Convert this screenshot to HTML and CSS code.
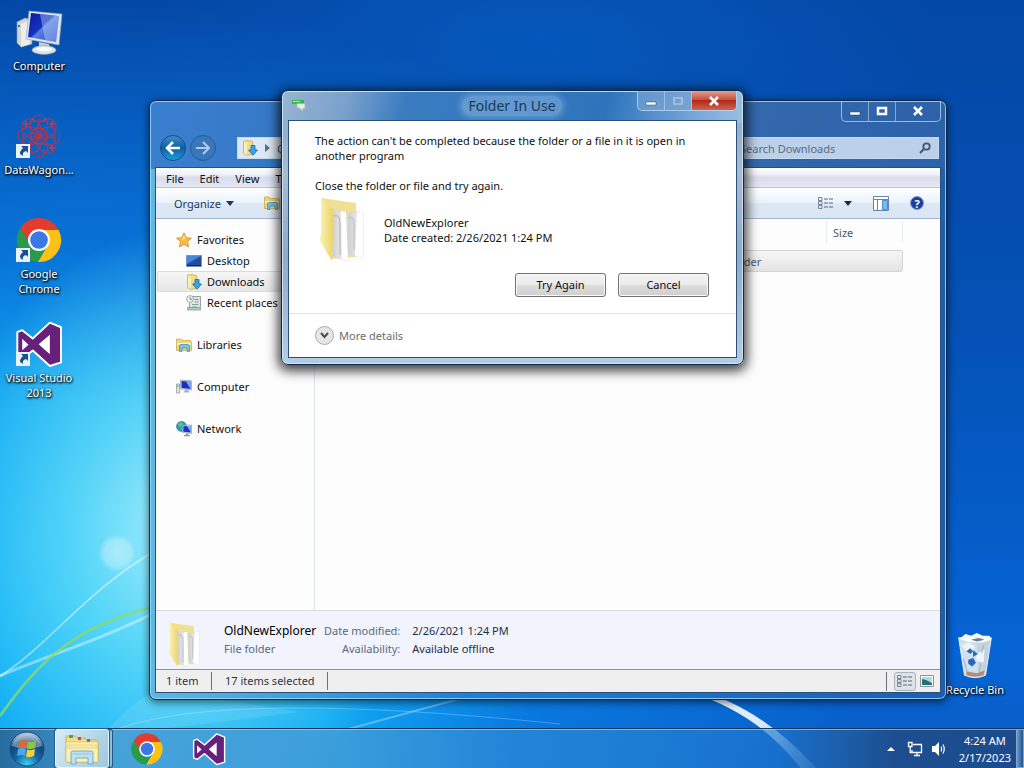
FILE: index.html
```html
<!DOCTYPE html>
<html lang="en">
<head>
    <meta charset="UTF-8">
    <meta name="viewport" content="width=device-width, initial-scale=1.0">
    <title>Folder In Use</title>
    <link rel="stylesheet" href="styles.css">
</head>
<body>
    <!-- shared icons -->
    <svg class="sprite" aria-hidden="true">
        <defs>
            <linearGradient id="g-screen" x1="0" y1="0" x2="1" y2="1">
                <stop offset="0" stop-color="#0a1e98"/>
                <stop offset=".45" stop-color="#1430c4"/>
                <stop offset=".5" stop-color="#5a80e0"/>
                <stop offset="1" stop-color="#1c46c8"/>
            </linearGradient>
            <linearGradient id="g-folder" x1="0" y1="0" x2="1" y2="0">
                <stop offset="0" stop-color="#fbf3b4"/>
                <stop offset="1" stop-color="#ecd468"/>
            </linearGradient>
            <linearGradient id="g-page" x1="0" y1="0" x2="1" y2="0">
                <stop offset="0" stop-color="#cfcfd2"/>
                <stop offset="1" stop-color="#f8f8f8"/>
            </linearGradient>
            <radialGradient id="g-orb" cx=".5" cy=".95" r=".9">
                <stop offset="0" stop-color="#3fd0f4"/>
                <stop offset=".4" stop-color="#1268a8"/>
                <stop offset=".75" stop-color="#0f4478"/>
                <stop offset="1" stop-color="#a8c4d8"/>
            </radialGradient>
        </defs>
        <symbol id="i-chrome" viewBox="0 0 48 48">
            <path fill="#e33b2e" d="M24 14H43.6A22 22 0 0 0 5.5 12L15.3 29A10 10 0 0 1 24 14Z"/>
            <path fill="#fbc116" d="M24 14H43.6A22 22 0 0 1 22.9 46L32.7 29A10 10 0 0 0 24 14Z"/>
            <path fill="#2b9a48" d="M22.9 46A22 22 0 0 1 5.5 12L15.3 29A10 10 0 0 0 32.7 29Z"/>
            <circle cx="24" cy="24" r="11" fill="#fff"/>
            <circle cx="24" cy="24" r="8.8" fill="#3b78e7"/>
        </symbol>
        <symbol id="i-vs" viewBox="44 355 146 146">
            <path fill="#68217a" stroke="#fff" stroke-width="6" stroke-linejoin="round" d="M51 392L66 386L98 411L150 363L184 377V484L150 495L98 448L66 473L51 466Z"/>
            <path fill="#fff" d="M66 412V447L85 430ZM116 429L150 400V459Z"/>
        </symbol>
        <symbol id="i-shortcut" viewBox="0 0 14 14">
            <path fill="#e8f4fc" d="M0 0H14V14H0Z"/>
            <path fill="#1d4d94" d="M5 2H12V9L10 7Q6 8 7 12Q1 9 7 4Z"/>
        </symbol>
        <symbol id="i-pc" viewBox="0 0 48 48">
            <path fill="#d0d5d8" stroke="#8b97a4" stroke-width=".6" d="M2 14L10 10L17 12V36L6 39L2 35Z"/>
            <path fill="#eceeee" d="M6 16L15 12V36L6 39Z"/>
            <circle cx="4" cy="18" r="1" fill="#444"/>
            <path fill="#c8ced2" d="M24 34L34 36L35 43H24Z"/>
            <ellipse cx="29" cy="42" rx="12" ry="4.400" fill="#dfe3e3" stroke="#949da3" stroke-width=".6"/>
            <ellipse cx="29" cy="41" rx="8" ry="2" fill="#f8f9f9"/>
            <path fill="#dde3e8" stroke="#95a1ad" stroke-width=".6" d="M14 3L47 6L44 37L11 31Z"/>
            <path fill="url(#g-screen)" d="M16 5L44 8L41 34L13 29Z"/>
            <path fill="#c4dcff" opacity=".4" d="M25 6L44 8L41 34L30 32Z"/>
        </symbol>
        <symbol id="i-atom" viewBox="0 0 48 48">
            <g fill="none" stroke="#b83450" stroke-width="1">
                <ellipse cx="24" cy="14" rx="9" ry="11"/>
                <ellipse cx="24" cy="14" rx="9" ry="11" transform="rotate(45 24 24)"/>
                <ellipse cx="24" cy="14" rx="9" ry="11" transform="rotate(90 24 24)"/>
                <ellipse cx="24" cy="14" rx="9" ry="11" transform="rotate(135 24 24)"/>
                <ellipse cx="24" cy="14" rx="9" ry="11" transform="rotate(180 24 24)"/>
                <ellipse cx="24" cy="14" rx="9" ry="11" transform="rotate(225 24 24)"/>
                <ellipse cx="24" cy="14" rx="9" ry="11" transform="rotate(270 24 24)"/>
                <ellipse cx="24" cy="14" rx="9" ry="11" transform="rotate(315 24 24)"/>
                <circle cx="24" cy="24" r="16" stroke-dasharray="5 3"/>
                <circle cx="24" cy="24" r="8" stroke-width="1.500"/>
            </g>
            <path stroke="#d23c4c" stroke-width="1.200" d="M8 12H14M11 9V15M34 12H40M37 9V15M34 36H40M37 33V39M17 6L20 10M31 6L28 10"/>
        </symbol>
        <symbol id="i-bin" viewBox="0 0 40 50">
            <path fill="#dfe9f0" opacity=".92" d="M3 6H37L31 45Q20 50 9 45Z"/>
            <path fill="#c0ccd6" d="M22 12L36 8L31 44L24 46Z" opacity=".7"/>
            <path fill="#fff" d="M4 7L10 2L16 4L22 1L28 4L35 4L37 8L28 11L12 10Z"/>
            <path fill="#6d7d8c" d="M16 8L24 6L30 8L22 10Z"/>
            <path fill="none" stroke="#e8f0f6" stroke-width="1" d="M3 6H37L31 45Q20 50 9 45Z"/>
            <path fill="#eff4f8" d="M6 14L13 11L20 15L14 24ZM20 24L30 18L29 32L22 30Z"/>
            <path fill="#2c66bc" d="M11 20L15 17L18 20L15 23ZM18 19L23 23L18 26ZM13 29L18 27L21 32L17 36L13 33Z"/>
            <path fill="#b58a70" d="M11 41L22 43L30 40L29 45Q20 48 11 45Z"/>
            <path stroke="#9fb0bf" stroke-width="1" fill="none" d="M8 28L12 42M26 33L24 42M29 14L27 22"/>
        </symbol>
        <symbol id="i-folder" viewBox="0 0 52 66">
            <path fill="#f0e192" d="M4 1L39 6V60L14 62Z"/>
            <path fill="url(#g-page)" stroke="#d6d6d6" stroke-width=".7" d="M31 16L46 14V61L31 57Z"/>
            <path fill="#fff" d="M40 15L46 14V61L38 59Z"/>
            <path fill="none" stroke="#b4bcc2" stroke-width="1" d="M32 21Q37 18 37 27V53"/>
            <path fill="url(#g-page)" stroke="#d6d6d6" stroke-width=".7" d="M16 13L29 15L31 64L15 59Z"/>
            <path fill="#fff" d="M24 14L29 15L31 64L25 62Z"/>
            <path fill="none" stroke="#aab2ba" stroke-width="1" d="M17 19Q23 17 23 26V58"/>
            <path fill="url(#g-folder)" d="M4 1L16 12V41L15 64L4 46Q2 44 4 36Z"/>
        </symbol>
        <symbol id="i-star" viewBox="0 0 16 16">
            <path fill="#fbb945" stroke="#d98a1c" stroke-width=".8" d="M8 .8L10.2 5.6L15.4 6.2L11.5 9.7L12.7 15L8 12.3L3.3 15L4.5 9.7L.6 6.2L5.8 5.6Z"/>
            <path fill="#fde59a" d="M8 3L9.4 6.6L6 8Z"/>
        </symbol>
        <symbol id="i-desktop" viewBox="0 0 16 16">
            <path fill="#244b96" stroke="#6f94c8" d="M.5 2.5H15.5V13.5H.5Z"/>
            <path fill="#4686dc" d="M1 3H15L1 11Z"/>
            <path fill="#16264e" d="M1 12H15V13H1Z"/>
        </symbol>
        <symbol id="i-downloads" viewBox="0 0 16 16">
            <path fill="#f3dc84" stroke="#c9a544" stroke-width=".7" d="M1.5 1L6 .6L10.500 1.500V14L5 15.500L1.500 13.500Z"/>
            <path fill="#fbf0b8" d="M2 1.500L5 3V15L2 13Z"/>
            <path fill="#3fa4e6" stroke="#1866b0" stroke-width=".8" d="M9 5.500H13V10H15.500L11 15.200L6.500 10H9Z"/>
        </symbol>
        <symbol id="i-recent" viewBox="0 0 16 16">
            <path fill="#dfe5e2" stroke="#7f8f8a" stroke-width=".8" d="M6 1.500H14.500V11.500L12.500 14.500H3.500V8"/>
            <path stroke="#7fa596" fill="none" d="M8 4.500H12.500M9 7H12.500M6 9.500H12.500M6 12H11"/>
            <circle cx="4" cy="4" r="3.400" fill="#f2f5f6" stroke="#8a979e" stroke-width=".8"/>
            <path stroke="#555" stroke-width=".7" fill="none" d="M4 2V4.300H6"/>
            <path fill="#bcc8c4" stroke="#6f817a" stroke-width=".6" d="M1.500 12.500H14.500V15H1.500Z"/>
        </symbol>
        <symbol id="i-lib" viewBox="0 0 16 16">
            <path fill="#f0d878" stroke="#c4a345" stroke-width=".7" d="M.5 2H5L6 3.500H14.500L15.500 5V13.500H.5Z"/>
            <path fill="#fdf3bd" d="M1 6H15V8H1Z"/>
            <path fill="#7cc2ea" stroke="#3a88b8" stroke-width=".7" d="M3.500 14.500V9Q3.500 7.500 5 7.500H12Q13.500 7.500 13.500 9V14.500H11V11H6V14.500Z"/>
        </symbol>
        <symbol id="i-computer" viewBox="0 0 16 16">
            <path fill="#dfe3e5" stroke="#77828c" stroke-width=".6" d="M.5 5H3.500V14H.5Z"/>
            <path fill="#5bb45a" d="M1 6.500H2.500V8H1Z"/>
            <path fill="#dce2e8" stroke="#8591a0" stroke-width=".6" d="M4.500 1L15.500 1.800V11L4.500 10Z"/>
            <path fill="#1a2fbe" d="M5.500 2L14.500 2.700V10L5.500 9Z"/>
            <path fill="#88a4ee" d="M10 2.400L14.500 2.700V10Z"/>
            <path fill="#a9b3bb" d="M9 11H12L13.500 13.500H7.500Z"/>
        </symbol>
        <symbol id="i-network" viewBox="0 0 16 16">
            <circle cx="5.500" cy="5.500" r="5" fill="#2f9fc6" stroke="#17728f" stroke-width=".6"/>
            <path fill="#67c96d" d="M2 3L5 1L7 3L4 6ZM5 7L7 8L6 10Z"/>
            <path fill="#dce2e8" stroke="#8591a0" stroke-width=".6" d="M6.500 4.500L15.500 4V12.500L6.500 11.500Z"/>
            <path fill="#1738c8" d="M7.300 5.300L14.700 5V11.600L7.300 10.700Z"/>
            <path fill="#8fb2f4" d="M11 5.100L14.700 5V11Z"/>
            <path fill="#8b979f" d="M10 12.500H12V14H14V15.300H8V14H10Z"/>
        </symbol>
        <symbol id="i-details" viewBox="0 0 16 12">
            <path fill="none" stroke="#7c8494" d="M.5 .5H4V3.500H.5ZM.5 4.500H4V7.500H.5ZM.5 8.500H4V11.500H.5Z"/>
            <path stroke="#58647c" stroke-dasharray="4 1" d="M6 2H16M6 6H16M6 10H16"/>
        </symbol>
    </svg>

    <div class="desktop">
        <svg class="rays" viewBox="0 0 1024 768" preserveAspectRatio="none" aria-hidden="true">
            <defs>
                <linearGradient id="g-beam" x1="0" y1="0" x2="1" y2="1">
                    <stop offset="0" stop-color="#fff" stop-opacity=".95"/>
                    <stop offset=".5" stop-color="#f0f8ff" stop-opacity=".9"/>
                    <stop offset="1" stop-color="#8cc4f4" stop-opacity=".6"/>
                </linearGradient>
                <radialGradient id="g-bubble">
                    <stop offset="0" stop-color="#fff" stop-opacity=".4"/>
                    <stop offset=".7" stop-color="#fff" stop-opacity=".3"/>
                    <stop offset="1" stop-color="#fff" stop-opacity="0"/>
                </radialGradient>
            </defs>
            <circle cx="117" cy="553" r="19" fill="url(#g-bubble)"/>
            <path d="M0 676C50 645 85 590 160 548" fill="none" stroke="#fff" stroke-width="1.500" opacity=".5"/>
            <path d="M0 676C60 650 90 645 160 610" fill="none" stroke="#fff" stroke-width="3" opacity=".4"/>
            <path d="M0 716C40 660 75 625 160 605" fill="none" stroke="#8edb62" stroke-width="2.500" opacity=".8"/>
            <path d="M100 740Q130 700 160 690L300 712L170 728Z" fill="#fff" opacity=".1"/>
            <path d="M120 728Q230 690 560 724" fill="none" stroke="#fff" opacity=".25"/>
            <path d="M330 734L470 696" stroke="#fff" stroke-width="2" opacity=".3"/>
            <path d="M690 688Q760 705 818 770H802Q760 714 690 692Z" fill="url(#g-beam)"/>
        </svg>

        <div class="shortcuts">
            <a href="#" class="shortcut">
                <span class="pic"><svg class="icon48"><use href="#i-pc"/></svg></span>
                <span>Computer</span>
            </a>
            <a href="#" class="shortcut">
                <span class="pic"><svg class="icon48"><use href="#i-atom"/></svg><svg class="arrow"><use href="#i-shortcut"/></svg></span>
                <span>DataWagon...</span>
            </a>
            <a href="#" class="shortcut">
                <span class="pic"><svg class="icon48"><use href="#i-chrome"/></svg><svg class="arrow"><use href="#i-shortcut"/></svg></span>
                <span>Google<br>Chrome</span>
            </a>
            <a href="#" class="shortcut">
                <span class="pic"><svg class="icon48"><use href="#i-vs"/></svg><svg class="arrow"><use href="#i-shortcut"/></svg></span>
                <span>Visual Studio<br>2013</span>
            </a>
        </div>

        <a href="#" class="shortcut recycle-bin">
            <span class="pic"><svg class="icon48"><use href="#i-bin"/></svg></span>
            <span>Recycle Bin</span>
        </a>

        <!-- explorer window -->
        <section class="window explorer" aria-label="Downloads">
            <div class="titlebar">
                <div class="caption">
                    <button type="button" aria-label="Minimize"><svg width="12" height="10"><path fill="#fff" stroke="#345" stroke-width=".5" d="M1 6H11V9H1Z"/></svg></button>
                    <button type="button" aria-label="Maximize"><svg width="12" height="10"><path fill="none" stroke="#fff" stroke-width="2.500" d="M2 2H10V8H2Z"/></svg></button>
                    <button type="button" class="close" aria-label="Close"><svg width="12" height="10"><path stroke="#fff" stroke-width="2.500" d="M2 1L10 9M10 1L2 9"/></svg></button>
                </div>
            </div>
            <div class="navbar">
                <div class="travel">
                    <button type="button" class="back" aria-label="Back"><svg width="16" height="14"><path fill="none" stroke="#fff" stroke-width="2.500" d="M15 7H3M8 1L2 7L8 13"/></svg></button>
                    <button type="button" class="forward" aria-label="Forward"><svg width="16" height="14"><path fill="none" stroke="#b4cce8" stroke-width="2" d="M1 7H13M8 1L14 7L8 13"/></svg></button>
                </div>
                <div class="address">
                    <svg class="icon16"><use href="#i-downloads"/></svg>
                    <svg width="5" height="8"><path fill="#56708e" d="M0 0L5 4L0 8Z"/></svg>
                    <span>C:</span>
                </div>
                <div class="search">
                    <input type="text" placeholder="Search Downloads" aria-label="Search Downloads">
                    <svg width="12" height="12"><circle cx="7.500" cy="4.500" r="3.200" fill="none" stroke="#46546a" stroke-width="1.800"/><path stroke="#46546a" stroke-width="2" d="M5 7L1 11"/></svg>
                </div>
            </div>
            <div class="client">
                <div class="menubar">
                    <button type="button">File</button>
                    <button type="button">Edit</button>
                    <button type="button">View</button>
                    <button type="button">Tools</button>
                </div>
                <div class="toolbar">
                    <button type="button" class="organize">Organize <svg width="8" height="5"><path fill="#1e395b" d="M0 0H8L4 5Z"/></svg></button>
                    <button type="button" class="library" aria-label="Include in library"><svg class="icon16"><use href="#i-lib"/></svg></button>
                    <button type="button" class="views" aria-label="Change your view"><svg width="16" height="12"><use href="#i-details"/></svg><svg width="8" height="5"><path fill="#1b2b45" d="M0 0H8L4 5Z"/></svg></button>
                    <button type="button" class="preview" aria-label="Show the preview pane"><svg width="16" height="15"><path fill="#fff" stroke="#6684aa" d="M.5 .5H15.500V14.500H.5Z"/><path fill="none" stroke="#6684aa" d="M.5 3.500H15.500M4.500 4V14"/><path fill="#72bdf0" stroke="#4d8fc6" d="M9.500 4.500H14.500V13.500H9.500Z"/></svg></button>
                    <button type="button" class="help" aria-label="Get help">?</button>
                </div>
                <div class="panes">
                    <nav class="sidebar">
                        <a href="#"><svg class="icon16"><use href="#i-star"/></svg>Favorites</a>
                        <a href="#" class="child"><svg class="icon16"><use href="#i-desktop"/></svg>Desktop</a>
                        <a href="#" class="child current"><svg class="icon16"><use href="#i-downloads"/></svg>Downloads</a>
                        <a href="#" class="child"><svg class="icon16"><use href="#i-recent"/></svg>Recent places</a>
                        <a href="#" class="group"><svg class="icon16"><use href="#i-lib"/></svg>Libraries</a>
                        <a href="#" class="group"><svg class="icon16"><use href="#i-computer"/></svg>Computer</a>
                        <a href="#" class="group"><svg class="icon16"><use href="#i-network"/></svg>Network</a>
                    </nav>
                    <div class="files">
                        <table>
                            <thead>
                                <tr><th class="name">Name</th><th class="date">Date modified</th><th class="type">Type</th><th class="size">Size</th></tr>
                            </thead>
                            <tbody>
                                <tr><td>OldNewExplorer</td><td>2/26/2021 1:24 PM</td><td>File folder</td><td></td></tr>
                            </tbody>
                        </table>
                    </div>
                </div>
                <div class="details">
                    <svg class="folder"><use href="#i-folder"/></svg>
                    <div class="item">
                        <strong>OldNewExplorer</strong>
                        <span>File folder</span>
                    </div>
                    <dl>
                        <dt>Date modified:</dt><dd>2/26/2021 1:24 PM</dd>
                        <dt>Availability:</dt><dd>Available offline</dd>
                    </dl>
                </div>
                <div class="statusbar">
                    <span class="count">1 item</span>
                    <span class="selected">17 items selected</span>
                    <div class="modes">
                        <button type="button" class="on" aria-label="Details"><svg width="16" height="12"><use href="#i-details"/></svg></button>
                        <button type="button" aria-label="Thumbnails"><svg width="14" height="12"><path fill="#fff" stroke="#8a949c" d="M.5 .5H13.500V11.500H.5Z"/><path fill="#a8dcec" d="M2 2H12V7H2Z"/><path fill="#24736c" d="M2 4L6 5L12 8V10H2Z"/></svg></button>
                    </div>
                </div>
            </div>
        </section>

        <!-- folder in use dialog -->
        <section class="window dialog" role="dialog" aria-labelledby="dialog-title">
            <div class="titlebar">
                <svg class="icon16" viewBox="0 0 16 16"><path fill="#39b54a" d="M1 3H13V7H1Z"/><path fill="#b6f0a6" d="M2 4H9V5H2Z"/><path fill="#e6ebe8" stroke="#9fb0b6" stroke-width=".6" d="M6 6.500H14V11.500H12V14L8 11H6Z"/></svg>
                <h1 id="dialog-title">Folder In Use</h1>
                <div class="caption">
                    <button type="button" aria-label="Minimize"><svg width="12" height="10"><path fill="#fff" stroke="#345" stroke-width=".5" d="M1 6H11V9H1Z"/></svg></button>
                    <button type="button" aria-label="Maximize" disabled><svg width="12" height="10"><path fill="none" stroke="#a4bcd8" stroke-width="2" d="M2 2H10V8H2Z"/></svg></button>
                    <button type="button" class="close" aria-label="Close"><svg width="12" height="10"><path stroke="#fff" stroke-width="2.500" d="M2 1L10 9M10 1L2 9"/></svg></button>
                </div>
            </div>
            <div class="client">
                <div class="message">
                    <p>The action can't be completed because the folder or a file in it is open in another program</p>
                    <p>Close the folder or file and try again.</p>
                    <div class="target">
                        <svg class="folder"><use href="#i-folder"/></svg>
                        <div>OldNewExplorer<br>Date created: 2/26/2021 1:24 PM</div>
                    </div>
                    <div class="actions">
                        <button type="button">Try Again</button>
                        <button type="button">Cancel</button>
                    </div>
                </div>
                <div class="footer">
                    <button type="button"><span class="expand"><svg width="9" height="7"><path fill="none" stroke="#4a4a4a" stroke-width="2" d="M1 1L4.500 5L8 1"/></svg></span>More details</button>
                </div>
            </div>
        </section>

        <footer class="taskbar">
            <button type="button" class="start" aria-label="Start">
                <svg width="36" height="36" viewBox="0 0 36 36">
                    <circle cx="18" cy="18" r="17" fill="url(#g-orb)" stroke="#1b4a74"/>
                    <path fill="#dce8f0" opacity=".4" d="M3 15Q7 3 18 3T33 15Q18 20 3 15Z"/>
                    <path fill="#e8652a" d="M11 10Q14 8 18 10L17 17Q13 15 9 17Z"/>
                    <path fill="#8cc63e" d="M19 10.500Q23 12 27 10L26 17Q22 19 18 17.500Z"/>
                    <path fill="#4ea6e6" d="M9 18Q13 16 17 18L16 25Q12 23 8 25Z"/>
                    <path fill="#fbcf3a" d="M18 18.500Q22 20 26 18L25 25Q21 27 17 25.500Z"/>
                </svg>
            </button>
            <button type="button" class="task running" aria-label="Windows Explorer">
                <svg width="34" height="32" viewBox="0 0 34 32">
                    <path fill="#f2dd88" stroke="#c8a443" stroke-width=".8" d="M1 3H10L12 5H20L21 7H31L33 9V29H1Z"/>
                    <path fill="#3fa65a" d="M4 2H8V5H4Z"/>
                    <path fill="#cf4a3a" d="M13 4H16V7H13Z"/>
                    <path fill="#3a7cc8" d="M22 6H25V9H22Z"/>
                    <path fill="#fcf0b4" stroke="#d6b95c" stroke-width=".6" d="M1 9H33V29H1Z"/>
                    <path fill="#f9e9a4" stroke="#dcc26c" stroke-width=".5" d="M2 12H32V15H2Z"/>
                    <path fill="#bfe0f2" stroke="#5b9fca" stroke-width=".8" d="M6 31V20Q6 18 8 18H26Q28 18 28 20V31H23V25H11V31Z"/>
                    <path stroke="#8cc0de" stroke-width=".8" d="M8 21H26"/>
                </svg>
            </button>
            <button type="button" class="task" aria-label="Google Chrome"><svg width="34" height="34"><use href="#i-chrome"/></svg></button>
            <button type="button" class="task" aria-label="Visual Studio 2013"><svg width="34" height="34"><use href="#i-vs"/></svg></button>
            <div class="tray">
                <button type="button" aria-label="Show hidden icons"><svg width="8" height="4"><path fill="#fff" d="M0 4L4 0L8 4Z"/></svg></button>
                <button type="button" aria-label="Network"><svg width="16" height="16"><path fill="none" stroke="#fff" stroke-width="1.300" d="M6 3.500H14.500V11.500H5V9M7 14.500H13M10 12V14M1.500 1.500H5V5.500H1.500ZM3.200 6V11.500H5"/></svg></button>
                <button type="button" aria-label="Volume"><svg width="16" height="16"><path fill="#fff" d="M1 5H4L8 1V15L4 11H1Z"/><path fill="none" stroke="#fff" stroke-width="1.200" d="M10 5.500Q11.500 8 10 10.500M12 3.500Q14.500 8 12 12.500"/></svg></button>
                <div class="clock">4:24 AM<br>2/17/2023</div>
                <button type="button" class="show-desktop" aria-label="Show desktop"></button>
            </div>
        </footer>
    </div>
</body>
</html>
```
FILE: styles.css
```css
* {
    box-sizing: border-box;
}
body {
    margin: 0;
    font-family: "Noto Sans", "Open Sans", sans-serif;
    font-size: 11px;
    line-height: 15px;
    color: #111;
}
button, input {
    font: inherit;
    color: inherit;
    margin: 0;
    padding: 0;
    border: 0;
    background: none;
}
a {
    color: inherit;
    text-decoration: none;
}
svg {
    display: block;
    flex-shrink: 0;
}
.sprite {
    position: absolute;
    width: 0;
    height: 0;
}
.icon16 {
    width: 16px;
    height: 16px;
}
.icon48 {
    width: 48px;
    height: 48px;
}
.desktop {
    position: relative;
    height: 100vh;
    overflow: hidden;
    display: flex;
    flex-direction: column;
    justify-content: space-between;
    background:
        radial-gradient(ellipse 240px 300px at 180px 530px, rgba(180, 245, 252, .9), rgba(120, 232, 250, .65) 45%, rgba(40, 190, 248, 0)),
        radial-gradient(ellipse 780px 620px at 80px 620px, #10b4f6, rgba(16, 172, 246, .95) 35%, rgba(10, 130, 232, .7) 60%, rgba(6, 90, 205, 0)),
        radial-gradient(ellipse 400px 160px at 540px 40px, rgba(6, 104, 210, .45), rgba(0, 100, 210, 0)),
        linear-gradient(#0448a6, #0450b4 40%, #0664d4 85%, #0a5cc4);
}
.rays {
    position: absolute;
    width: 100%;
    height: 100%;
}

/* desktop icons */
.shortcuts {
    position: relative;
    width: 78px;
    padding-top: 8px;
}
.shortcut {
    display: flex;
    flex-direction: column;
    align-items: center;
    min-height: 104px;
    white-space: nowrap;
    text-align: center;
    color: #fff;
    text-shadow: 1px 1px 2px #000, 0 1px 3px #000;
}
.pic {
    position: relative;
    height: 50px;
}
.arrow {
    position: absolute;
    left: 1px;
    bottom: 4px;
    width: 14px;
    height: 14px;
}
.recycle-bin {
    position: absolute;
    right: 10px;
    bottom: 32px;
    width: 78px;
}

/* windows */
.window {
    position: absolute;
    display: flex;
    flex-direction: column;
    border: 1px solid #0e2a48;
    border-radius: 7px;
}
.window .client {
    display: flex;
    flex-direction: column;
    border: 1px solid #2c4f78;
    background: #fff;
}
.titlebar {
    display: flex;
}
.caption {
    display: flex;
    align-self: flex-start;
    border: 1px solid rgba(200, 225, 250, .7);
    border-top: 0;
    border-radius: 0 0 5px 5px;
    overflow: hidden;
}
.caption button {
    display: flex;
    align-items: center;
    justify-content: center;
    width: 27px;
    height: 19px;
    border-right: 1px solid rgba(190, 215, 245, .6);
}
.caption .close {
    width: 44px;
    border-right: 0;
}
.explorer {
    left: 149px;
    right: 77px;
    top: 100px;
    bottom: 68px;
    padding: 0 5px 6px;
    box-shadow: inset 0 0 0 1px rgba(170, 220, 250, .8), 0 2px 8px rgba(0, 0, 0, .6);
    background: linear-gradient(100deg, #3a80d0, #2f6cb8 40%, #3468ac 75%, #2c62aa) top / 100% 68px no-repeat,
        linear-gradient(90deg, #5cb8e4, #1a80dc 40%, #1860b4);
}
.explorer .titlebar {
    justify-content: flex-end;
    height: 31px;
}
.explorer .caption button {
    height: 20px;
}
.navbar {
    display: flex;
    align-items: center;
    height: 35px;
    padding: 0 2px 3px 5px;
}
.travel {
    display: flex;
    gap: 4px;
    margin-right: 21px;
}
.travel button {
    display: flex;
    align-items: center;
    justify-content: center;
    width: 26px;
    height: 26px;
    border: 1px solid #1a4a86;
    border-radius: 50%;
    background: linear-gradient(#3d8fcc, #0c5fa4 50%, #18a0d8);
}
.travel .forward {
    background: rgba(60, 115, 180, .7);
    border-color: #285a98;
}
.address, .search {
    display: flex;
    align-items: center;
    height: 22px;
    border: 1px solid #c4dcf2;
    background: #bdd0ea;
    color: #3a4a60;
}
.address {
    flex: 1;
    gap: 7px;
    margin-right: 6px;
    padding-left: 4px;
    background: #dce8f4;
}
.search {
    width: 206px;
    padding: 0 7px 0 6px;
}
.search input {
    flex: 1;
    min-width: 0;
    outline: none;
}
.search input::placeholder {
    color: #5c6b80;
    opacity: 1;
}
.explorer .client {
    flex: 1;
    min-height: 0;
}
.menubar {
    display: flex;
    height: 20px;
    padding: 2px 0 0 10px;
    gap: 16px;
    background: linear-gradient(#fff, #eef0f8 35%, #d9dcec 50%, #e4e7f4);
    border-bottom: 1px solid #b9c4d8;
}
.toolbar {
    display: flex;
    align-items: center;
    height: 31px;
    padding: 0 16px 0 18px;
    color: #1e395b;
    background: linear-gradient(#fff, #e9f2fb 50%, #dce8f5 51%, #dae6f4);
    border-bottom: 1px solid #a3b4cc;
}
.toolbar button {
    display: flex;
    align-items: center;
}
.organize {
    gap: 5px;
}
.library {
    margin-left: 30px;
}
.views {
    gap: 10px;
    margin-left: auto;
}
.preview {
    margin-left: 21px;
}
.toolbar .help {
    justify-content: center;
    width: 14px;
    height: 14px;
    margin-left: 21px;
    border: 1px solid #7f9cd0;
    border-radius: 50%;
    background: #1c3f9e;
    color: #fff;
    font-weight: bold;
}
.panes {
    flex: 1;
    display: flex;
    min-height: 0;
    overflow: hidden;
    background: #fdfdfe;
}
.sidebar {
    width: 159px;
    padding: 10px 0 0 1px;
    border-right: 1px solid #dfe4ec;
    flex-shrink: 0;
}
.sidebar a {
    display: flex;
    align-items: center;
    gap: 5px;
    height: 21px;
    padding-left: 19px;
    white-space: nowrap;
}
.sidebar .child {
    padding-left: 29px;
}
.sidebar .current {
    background: linear-gradient(#f6f6f6, #e6e6e6);
    border: 1px solid #dcdcdc;
    padding-left: 28px;
}
.sidebar .group {
    margin-top: 21px;
}
.files {
    flex: 1;
    padding: 2px 37px 0 12px;
    color: #4c5a6e;
}
.files table {
    width: 100%;
    table-layout: fixed;
    border-collapse: separate;
    border-spacing: 0;
}
.files th {
    height: 22px;
    padding: 0 6px;
    font-weight: normal;
    text-align: left;
    border-right: 1px solid #e6eaf2;
}
.files .date {
    width: 141px;
}
.files .type {
    width: 123px;
}
.files .size {
    width: 76px;
}
.files tbody::before {
    content: "";
    display: block;
    height: 7px;
}
.files td {
    height: 22px;
    padding: 0 6px;
    border: solid #d4d4d4;
    border-width: 1px 0;
    background: linear-gradient(#f6f6f6, #e4e4e4);
}
.files td:last-child {
    border-right-width: 1px;
    border-radius: 0 3px 3px 0;
}
.details {
    display: flex;
    align-items: center;
    height: 59px;
    padding: 0 11px;
    line-height: 18px;
    color: #5a6880;
    background: #f1f4fc;
    border-top: 1px solid #d5dce8;
    overflow: hidden;
}
.details .folder {
    width: 36px;
    height: 46px;
    margin: 10px 21px 0 0;
}
.details .item {
    display: flex;
    flex-direction: column;
    min-width: 96px;
}
.details strong {
    font-size: 12px;
    font-weight: normal;
    color: #000;
}
.details dl {
    display: grid;
    grid-template-columns: auto auto;
    column-gap: 12px;
    margin: 0 0 0 4px;
}
.details dt {
    text-align: right;
}
.details dd {
    margin: 0;
    color: #1e2d48;
}
.statusbar {
    display: flex;
    align-items: center;
    height: 23px;
    color: #2a3548;
    background: #f0efef;
    border-top: 1px solid #8a8f98;
}
.statusbar span {
    line-height: 18px;
    border-right: 1px solid #6d7178;
}
.count {
    width: 56px;
    padding-left: 10px;
}
.selected {
    width: 116px;
    padding-left: 13px;
}
.modes {
    display: flex;
    align-items: center;
    margin-left: auto;
    padding: 0 2px 0 7px;
    border-left: 1px solid #6d7178;
}
.modes button {
    display: flex;
    align-items: center;
    justify-content: center;
    width: 22px;
    height: 19px;
}
.modes .on {
    border: 1px solid #a9b4c0;
    border-radius: 3px;
    background: #dfe3e8;
}

/* dialog */
.dialog {
    left: 281px;
    top: 90px;
    width: 463px;
    padding: 0 6px 6px;
    background:
        linear-gradient(105deg, #98b4d2, #7ba2cc 14%, #3a7cc0 27%, #2e74bc 70%, #7aa8d8 90%, #9cc0e4) top / 100% 32px no-repeat,
        linear-gradient(#7ea6cc, #a8bcd2 30%, #8fabc8 60%, #b4cce4);
    box-shadow: inset 0 0 0 1px rgba(220, 238, 252, .8), 0 3px 12px 3px rgba(0, 0, 0, .75);
}
.dialog .titlebar {
    justify-content: space-between;
    height: 29px;
}
.dialog .titlebar .icon16 {
    margin: 6px 0 0 3px;
}
.dialog h1 {
    margin: 5px 0 0 80px;
    padding: 0 6px;
    height: 20px;
    line-height: 19px;
    font-size: 14px;
    font-weight: normal;
    color: #1c3858;
    border-radius: 10px;
    background: rgba(185, 215, 240, .35);
    box-shadow: 0 0 6px 2px rgba(185, 215, 240, .35);
}
.dialog .caption {
    height: 20px;
    background: rgba(120, 165, 210, .6);
}
.dialog .caption .close {
    background: linear-gradient(#e0a094, #c8503c 45%, #b02a18 50%, #d06450);
}
.message {
    padding: 12px 27px 16px 26px;
}
.message p {
    margin: 0 0 15px;
}
.target {
    display: flex;
    align-items: center;
    gap: 15px;
    margin-top: -11px;
}
.dialog .folder {
    width: 52px;
    height: 66px;
    margin-left: 2px;
}
.actions {
    display: flex;
    justify-content: flex-end;
    gap: 12px;
    margin-top: 10px;
}
.actions button {
    width: 91px;
    height: 24px;
    padding-bottom: 2px;
    border: 1px solid #707070;
    border-radius: 3px;
    background: linear-gradient(#f3f3f3, #ebebeb 50%, #dddddd 51%, #cfcfcf);
    box-shadow: inset 0 0 0 1px #fafafa;
}
.footer {
    padding: 12px 26px;
    border-top: 1px solid #dfe6ee;
}
.footer button {
    display: flex;
    align-items: center;
    gap: 5px;
    color: #6c6c6c;
}
.expand {
    display: flex;
    align-items: center;
    justify-content: center;
    width: 19px;
    height: 19px;
    border: 1px solid #acacac;
    border-radius: 50%;
    background: #e6e6e6;
}

/* taskbar */
.taskbar {
    position: relative;
    display: flex;
    align-items: center;
    height: 40px;
    border-top: 1px solid #14385c;
    box-shadow: inset 0 1px 0 rgba(180, 220, 250, .6);
    background: linear-gradient(90deg, rgba(40, 105, 155, .95), rgba(72, 160, 215, .95) 11%, rgba(62, 158, 218, .95) 32%, rgba(36, 134, 215, .9) 50%, rgba(32, 120, 205, .6) 76%, rgba(30, 95, 170, .9) 82%, #1d4f90 87%, #1b4b8c);
}
.start {
    margin: 0 10px 0 9px;
}
.task {
    display: flex;
    align-items: center;
    justify-content: center;
    width: 62px;
    height: 39px;
}
.task.running {
    width: 54px;
    margin-right: 7px;
    border: 1px solid #e8f6fd;
    border-radius: 3px;
    background: linear-gradient(120deg, #d8ebf5, #9cc8e0);
    box-shadow: 0 0 0 1px #235880, 4px 0 0 -1px #8cc0e0, 4px 0 0 #235880;
}
.tray {
    display: flex;
    align-items: center;
    gap: 8px;
    height: 100%;
    margin-left: auto;
    color: #fff;
}
.tray button:first-child {
    margin-right: 4px;
}
.clock {
    margin-left: 4px;
    line-height: 17px;
    text-align: center;
}
.show-desktop {
    align-self: stretch;
    width: 8px;
    margin-left: -3px;
    border: 1px solid #7ea8d0;
    background: linear-gradient(90deg, #6f9ac8, #23518c);
}
```
